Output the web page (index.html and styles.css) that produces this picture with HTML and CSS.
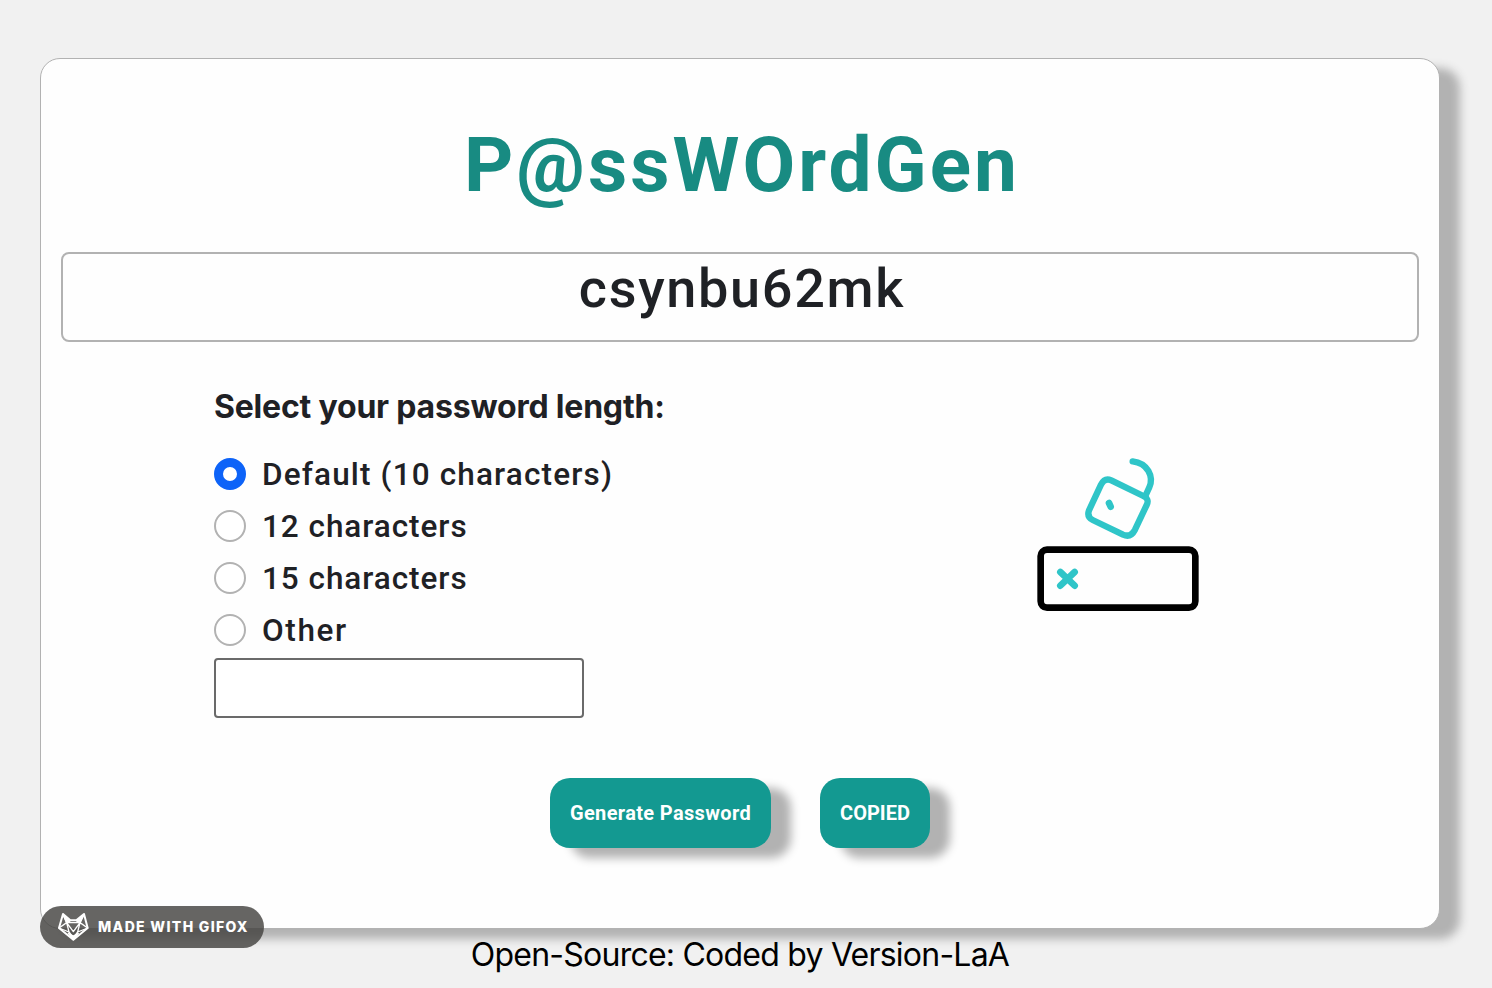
FILE: index.html
```html
<!DOCTYPE html>
<html lang="en">
<head>
<meta charset="utf-8">
<title>P@ssWOrdGen</title>
<link rel="stylesheet" href="styles.css">
</head>
<body>
<main class="card">
  <h1 class="title">P@ssWOrdGen</h1>
  <div class="output">csynbu62mk</div>
  <section class="options">
    <form class="lengths">
      <h2 class="heading">Select your password length:</h2>
      <label class="option"><span class="radio radio-on"></span><span class="t-default">Default (10 characters)</span></label>
      <label class="option"><span class="radio"></span><span class="t-num">12 characters</span></label>
      <label class="option"><span class="radio"></span><span class="t-num">15 characters</span></label>
      <label class="option"><span class="radio"></span><span class="t-other">Other</span></label>
      <input class="custom" type="text" aria-label="Other length">
    </form>
    <svg class="lock" width="200" height="190" viewBox="0 0 600 570" fill="none" stroke-linecap="round" stroke-linejoin="round">
      <g stroke="#2fc5c8" stroke-width="19">
        <path d="M274 121L370 168Q389 177 380 195L345 269Q332 294 309 284L218 240Q200 231 207 211L243 134Q254 112 274 121Z"/>
        <path d="M338 64C383 69 402 110 388 142L376 168"/>
        <path stroke-width="20" d="M267 189L272 200"/>
        <path stroke-width="20" d="M121 396L164 437M164 396L121 437"/>
      </g>
      <rect x="62" y="329" width="464" height="174" rx="19" stroke="#000" stroke-width="20"/>
    </svg>
  </section>
  <div class="actions">
    <button class="btn btn-generate">Generate Password</button>
    <button class="btn btn-copy">COPIED</button>
  </div>
</main>
<footer class="credit">Open-Source: Coded by Version-LaA</footer>
<div class="badge">
  <svg width="32" height="30" viewBox="0 0 96 90" fill="none" stroke="#fff" stroke-width="4" stroke-linejoin="round">
    <path stroke-width="6" d="M18 6L40 25H58L81 6L92 48L49 83L6 48Z"/>
    <path d="M18 6L29 32L6 48L36 60L29 32L40 27M81 6L69 32L92 48L62 60L69 32L58 27M29 32H69L49 59ZM36 60L49 78L62 60"/>
    <path fill="#fff" d="M18 8L38 26L29 32ZM81 8L60 26L69 32ZM34 64L49 72L64 64L49 83Z"/>
  </svg>
  <span class="badge-text">MADE WITH GIFOX</span>
</div>
</body>
</html>
```
FILE: styles.css
```css
* { box-sizing: border-box; }
body {
  margin: 0;
  width: 1492px;
  height: 988px;
  overflow: hidden;
  padding: 58px 0 0 40px;
  background: #f1f1f1;
  color: #1f2125;
  font-family: Roboto, sans-serif;
  white-space: nowrap;
}
.card {
  width: 1400px;
  height: 871px;
  padding: 0 20px;
  background: #fefefe;
  border: 1px solid #b2b2b2;
  border-radius: 20px;
  box-shadow: 20px 10px 10px #b2b2b2;
}
.title {
  margin: 0;
  padding: 61px 0 0 4px;
  height: 193px;
  font-size: 76.5px;
  line-height: 91px;
  font-weight: 700;
  letter-spacing: 3px;
  text-align: center;
  color: #188b82;
}
.output {
  height: 90px;
  padding-left: 4px;
  border: 2px solid #b2b2b2;
  border-radius: 8px;
  font-size: 54px;
  font-weight: 500;
  line-height: 69px;
  letter-spacing: 1.7px;
  text-align: center;
}
.options {
  display: flex;
  justify-content: space-between;
  padding: 41px 199px 0 153px;
}
.heading {
  margin: 0 0 17px;
  font: 700 32px/48px Inter, sans-serif;
  letter-spacing: -.2px;
}
.option {
  display: flex;
  align-items: center;
  gap: 16px;
  height: 52px;
  font-size: 31.5px;
  font-weight: 500;
}
.t-default { letter-spacing: 1.15px; }
.t-num { letter-spacing: .95px; }
.t-other { letter-spacing: 1.6px; }
.radio {
  width: 32px;
  height: 32px;
  border: 2px solid #b2b2b2;
  border-radius: 50%;
  background: #fff;
}
.radio-on { border: 9px solid #0d63f8; }
.custom {
  display: block;
  width: 370px;
  height: 60px;
  margin-top: 2px;
  border: 2px solid #6a6a6a;
  border-radius: 4px;
  background: #fff;
}
.lock { margin-top: 57px; }
.actions {
  display: flex;
  justify-content: center;
  gap: 49px;
  margin-top: 60px;
}
.btn {
  height: 70px;
  padding: 0;
  border: 0;
  border-radius: 20px;
  background: #139991;
  box-shadow: 20px 10px 10px #b2b2b2;
  color: #fff;
  font: 700 20px Roboto, sans-serif;
}
.btn-generate { width: 221px; letter-spacing: .35px; }
.btn-copy { width: 110px; }
.credit {
  width: 1400px;
  padding-top: 2px;
  color: #000;
  text-align: center;
  font: 32px/48px Inter, sans-serif;
  letter-spacing: -.77px;
}
.badge {
  position: absolute;
  left: 40px;
  top: 906px;
  width: 224px;
  height: 42px;
  padding-left: 17px;
  display: flex;
  align-items: center;
  gap: 9px;
  border-radius: 21px;
  background: rgba(64, 62, 60, .8);
  color: #fff;
  font: 800 14px Inter, sans-serif;
  letter-spacing: 1.33px;
}
.badge-text { padding-bottom: 1px; }
```
